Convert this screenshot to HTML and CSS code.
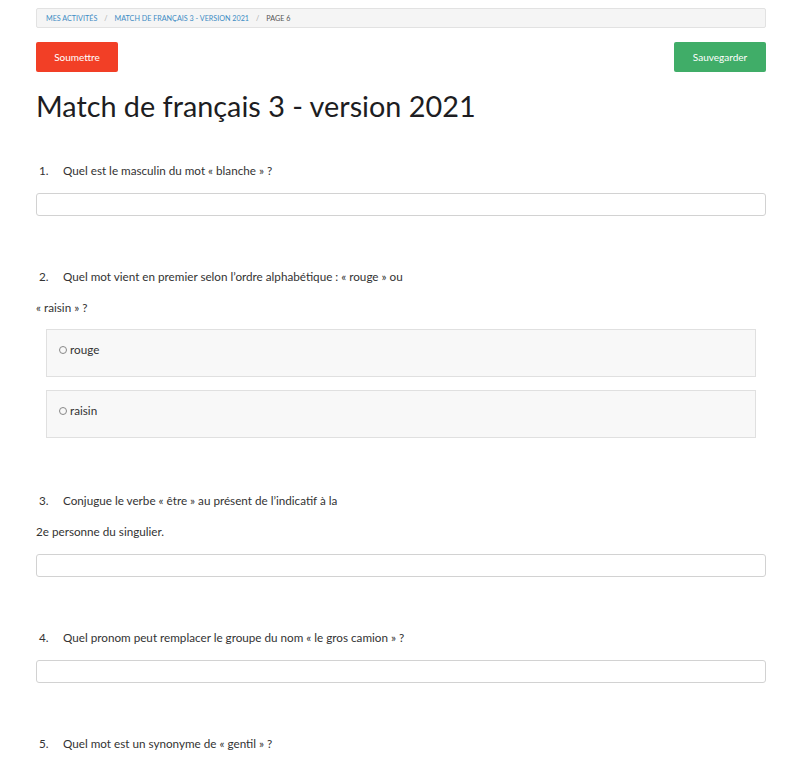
FILE: index.html
```html
<!DOCTYPE html>
<html lang="fr">
<head>
<meta charset="utf-8">
<title>Match de français 3 - version 2021</title>
<link rel="stylesheet" href="styles.css">
</head>
<body>
<div class="page">
  <nav class="breadcrumb">
    <a href="#">Mes activités</a>
    <span class="sep">/</span>
    <a href="#">Match de français 3 - version 2021</a>
    <span class="sep">/</span>
    <span class="current">Page 6</span>
  </nav>

  <div class="actions">
    <button class="btn btn-submit">Soumettre</button>
    <button class="btn btn-save">Sauvegarder</button>
  </div>

  <h1 class="title">Match de français 3 - version 2021</h1>

  <section class="question">
    <p class="q-line"><span class="num">1.</span>Quel est le masculin du mot « blanche » ?</p>
    <input class="answer" type="text">
  </section>

  <section class="question">
    <p class="q-line"><span class="num">2.</span>Quel mot vient en premier selon l’ordre alphabétique : « rouge » ou</p>
    <p class="q-cont">« raisin » ?</p>
    <div class="choices">
      <label class="choice"><span class="radio"></span>rouge</label>
      <label class="choice"><span class="radio"></span>raisin</label>
    </div>
  </section>

  <section class="question">
    <p class="q-line"><span class="num">3.</span>Conjugue le verbe « être » au présent de l’indicatif à la</p>
    <p class="q-cont">2e personne du singulier.</p>
    <input class="answer" type="text">
  </section>

  <section class="question">
    <p class="q-line"><span class="num">4.</span>Quel pronom peut remplacer le groupe du nom « le gros camion » ?</p>
    <input class="answer" type="text">
  </section>

  <section class="question">
    <p class="q-line"><span class="num">5.</span>Quel mot est un synonyme de « gentil » ?</p>
  </section>
</div>
</body>
</html>
```

FILE: styles.css
```css
html, body {
  margin: 0;
  padding: 0;
  background: #fff;
}
body {
  font-family: "Lato", "Open Sans", sans-serif;
  color: #333;
  overflow: hidden;
}
.page {
  width: 730px;
  margin: 0 0 0 36px;
  padding-top: 8px;
}
.breadcrumb {
  display: flex;
  align-items: center;
  height: 18px;
  padding: 0 9px;
  background: #f5f5f5;
  border: 1px solid #e2e2e2;
  border-radius: 2px;
  font-size: 7.2px;
  text-transform: uppercase;
}
.breadcrumb a {
  color: #3d8cc4;
  text-decoration: none;
}
.breadcrumb .sep {
  color: #aaa;
  padding: 0 7px;
}
.breadcrumb .current {
  color: #555;
}
.actions {
  display: flex;
  justify-content: space-between;
  margin-top: 14px;
}
.btn {
  height: 30px;
  border: none;
  border-radius: 2px;
  color: #fff;
  font-family: inherit;
  font-size: 10px;
  padding: 0;
}
.btn-submit {
  width: 82px;
  background: #f23f26;
}
.btn-save {
  width: 92px;
  background: #40ad68;
}
.title {
  margin: 17px 0 0;
  font-size: 28.8px;
  font-weight: 400;
  line-height: 34px;
  color: #1d1d22;
}
.question {
  margin-top: 32px;
}
.question + .question {
  margin-top: 45px;
}
.q-line, .q-cont {
  margin: 0;
  font-size: 11.7px;
  line-height: 31px;
  color: #333;
}
.q-line {
  padding-left: 3px;
}
.num {
  display: inline-block;
  width: 24px;
}
.answer {
  display: block;
  box-sizing: border-box;
  width: 100%;
  height: 23px;
  margin-top: 7px;
  border: 1px solid #d2d2d2;
  border-radius: 3px;
  background: #fff;
}
.choices {
  display: flex;
  flex-direction: column;
  gap: 13px;
  margin: 6px 10px 0;
  padding-bottom: 2px;
}
.choice {
  display: flex;
  align-items: flex-start;
  box-sizing: border-box;
  height: 48px;
  padding: 12px 12px;
  background: #f8f8f8;
  border: 1px solid #e0e0e0;
  font-size: 11.7px;
  color: #333;
}
.radio {
  width: 6px;
  height: 6px;
  border: 1px solid #888;
  border-radius: 50%;
  margin: 4px 3px 0 0;
}
```
